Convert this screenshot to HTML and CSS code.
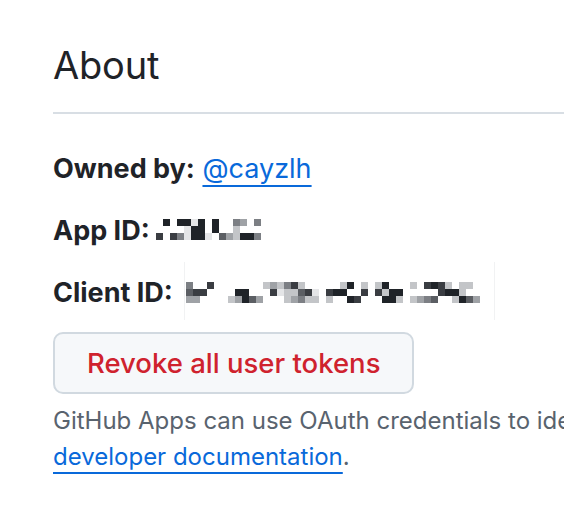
FILE: index.html
```html
<!DOCTYPE html>
<html lang="en">
<head>
<meta charset="utf-8">
<title>About</title>
<link rel="stylesheet" href="styles.css">
</head>
<body>
<main class="page">
  <h2 class="subhead">About</h2>
  <div class="meta">
    <p class="row"><strong>Owned by:</strong> <a class="link" href="#">@cayzlh</a></p>
    <p class="row"><strong>App ID:</strong><span class="mosaic app" data-rows="070771707004304,000017707002000,606417710532774"></span></p>
    <p class="row"><strong>Client ID:</strong> <span class="redact"><span class="mosaic client" data-rows="400600000002324620000027020270002067620220,566000077000612256106770060627700000677200,330000237530002342202007600077202345002753"></span></span></p>
  </div>
  <button class="btn-danger" type="button">Revoke all user tokens</button>
  <p class="note"><span class="lead">GitHub Apps can use OAuth credentials to identify users. Learn more about identifying users by reading our</span> <a class="link" href="#">developer documentation</a>.</p>
</main>
<script src="script.js"></script>
</body>
</html>
```

FILE: script.js
```js
document.querySelectorAll('.mosaic').forEach(function (el) {
  var rows = el.getAttribute('data-rows').split(',');
  rows.forEach(function (row) {
    var r = document.createElement('span');
    r.className = 'mrow';
    row.split('').forEach(function (d) {
      var c = document.createElement('span');
      c.className = 'cell s' + d;
      r.appendChild(c);
    });
    el.appendChild(r);
  });
});
```

FILE: styles.css
```css
* { box-sizing: border-box; }
html, body { margin: 0; padding: 0; background: #ffffff; }
body {
  font-family: Inter, "Noto Sans", "Liberation Sans", sans-serif;
  color: #1f2328;
  overflow: hidden;
}
.page {
  padding: 41px 0 0 53px;
  width: 564px;
}
.subhead {
  margin: 0 -200px 39px 0;
  font-size: 38px;
  font-weight: 400;
  line-height: 48px;
  letter-spacing: -0.2px;
  padding-bottom: 23px;
  border-bottom: 2px solid #d8dee4;
}
.meta {
  display: flex;
  flex-direction: column;
  gap: 30px;
}
.row {
  margin: 0;
  font-size: 27px;
  line-height: 32px;
  white-space: nowrap;
}
.row strong { font-weight: 700; }
.link {
  color: #0969da;
  text-decoration: underline;
  text-decoration-thickness: 2px;
  text-underline-offset: 7px;
}
.mosaic {
  display: inline-block;
  overflow: hidden;
  vertical-align: 0;
  line-height: 0;
}
.mosaic.app { margin-left: 6px; }
.mrow { display: flex; }
.cell { width: 7px; height: 7px; display: block; }
.s0 { background: #ffffff; }
.s1 { background: #e4e5e7; }
.s2 { background: #c3c5c8; }
.s3 { background: #9fa2a6; }
.s4 { background: #7c7f84; }
.s5 { background: #5b5e63; }
.s6 { background: #3a3d42; }
.s7 { background: #1f2328; }
.redact {
  display: inline-block;
  overflow: hidden;
  padding: 20px 14px 17px 1px;
  margin: -20px 0 -17px 4px;
  border-left: 1px solid #f1f2f3;
  border-right: 1px solid #f1f2f3;
  vertical-align: -1px;
  line-height: 0;
  font-size: 0;
}
.redact .mosaic { display: block; }
.btn-danger {
  display: block;
  margin: 23px 0 0;
  height: 62px;
  padding: 0 32px;
  font-family: inherit;
  font-size: 27.5px;
  font-weight: 500;
  color: #cf222e;
  background: #f6f8fa;
  border: 2px solid #d1d9e0;
  border-radius: 10px;
}
.note {
  margin: 9px 0 0;
  font-size: 24px;
  line-height: 36px;
  color: #59636e;
}
.lead { white-space: nowrap; }
```
